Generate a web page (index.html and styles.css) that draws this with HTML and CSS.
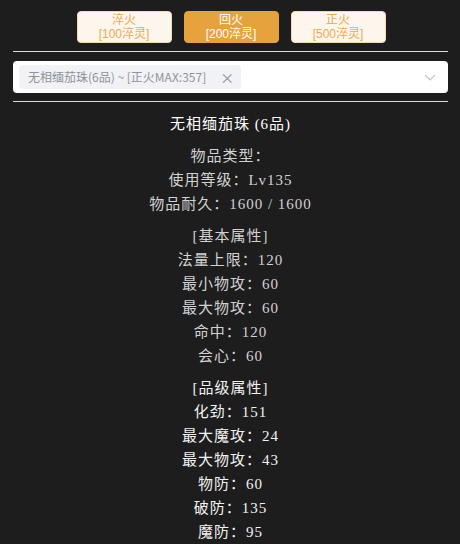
FILE: index.html
```html
<!DOCTYPE html>
<html lang="zh">
<head>
<meta charset="utf-8">
<link rel="stylesheet" href="styles.css">
</head>
<body>
<div class="page">
  <div class="btns">
    <div class="btn"><span class="ln">淬火</span><span class="ln">[100淬灵]</span></div>
    <div class="btn active"><span class="ln">回火</span><span class="ln">[200淬灵]</span></div>
    <div class="btn"><span class="ln">正火</span><span class="ln">[500淬灵]</span></div>
  </div>
  <div class="divider"></div>
  <div class="select">
    <span class="tag">无相缅茄珠(6品) ~ [正火MAX:357]<span class="close">×</span></span>
    <svg class="arrow" width="14" height="14" viewBox="0 0 14 14"><path d="M2 5 L7 10 L12 5" fill="none" stroke="#c0c4cc" stroke-width="1.2"/></svg>
  </div>
  <div class="divider"></div>
  <div class="info">
    <div class="title">无相缅茄珠 (6品)</div>
    <div class="group dim">
      <div class="row">物品类型：</div>
      <div class="row">使用等级：Lv135</div>
      <div class="row">物品耐久：1600 / 1600</div>
    </div>
    <div class="group dim">
      <div class="row">[基本属性]</div>
      <div class="row">法量上限：120</div>
      <div class="row">最小物攻：60</div>
      <div class="row">最大物攻：60</div>
      <div class="row">命中：120</div>
      <div class="row">会心：60</div>
    </div>
    <div class="group bright">
      <div class="row">[品级属性]</div>
      <div class="row">化劲：151</div>
      <div class="row">最大魔攻：24</div>
      <div class="row">最大物攻：43</div>
      <div class="row">物防：60</div>
      <div class="row">破防：135</div>
      <div class="row">魔防：95</div>
    </div>
  </div>
</div>
</body>
</html>
```

FILE: styles.css
```css
html, body {
  margin: 0;
  padding: 0;
  background: #1d1d1d;
}
body {
  font-family: "Liberation Serif", "Noto Sans CJK SC", serif;
}
.page {
  width: 435px;
  margin-left: 13px;
  padding-top: 11px;
}
.btns {
  display: flex;
  justify-content: center;
  gap: 12px;
  padding-left: 1px;
}
.btn {
  box-sizing: border-box;
  width: 95px;
  height: 32px;
  border: 1px solid #f5dab1;
  background: #fdf6ec;
  color: #eaaa55;
  border-radius: 4px;
  font-family: "Liberation Sans", "Noto Sans CJK SC", sans-serif;
  font-size: 12px;
  text-align: center;
  display: flex;
  flex-direction: column;
  align-items: center;
  justify-content: center;
}
.ln {
  display: block;
  height: 14px;
  line-height: 14px;
  overflow: visible;
}
.btn.active {
  background: #e6a23c;
  border-color: #e6a23c;
  color: #fff;
}
.divider {
  height: 1px;
  background: #dcdcdc;
  margin-top: 8px;
}
.select {
  box-sizing: border-box;
  height: 32px;
  margin-top: 9px;
  background: #fff;
  border-radius: 4px;
  display: flex;
  align-items: center;
  padding-left: 6px;
  padding-right: 11px;
}
.tag {
  box-sizing: border-box;
  height: 24px;
  width: 222px;
  background: #f0f2f5;
  color: #909399;
  border-radius: 4px;
  font-family: "Noto Sans CJK SC", sans-serif;
  font-size: 12px;
  line-height: 24px;
  padding-left: 9px;
  white-space: nowrap;
  display: flex;
  align-items: center;
}
.close {
  margin-left: 14px;
  font-size: 14px;
  color: #909399;
}
.arrow {
  margin-left: auto;
}
.info {
  margin-top: 10px;
  text-align: center;
  font-size: 15px;
  letter-spacing: 1px;
}
.title {
  height: 24px;
  line-height: 24px;
  color: #fff;
}
.group {
  margin-top: 8px;
}
.row {
  height: 24px;
  line-height: 24px;
}
.dim {
  color: #d2d2d2;
}
.bright {
  color: #f2f2f2;
}
```
